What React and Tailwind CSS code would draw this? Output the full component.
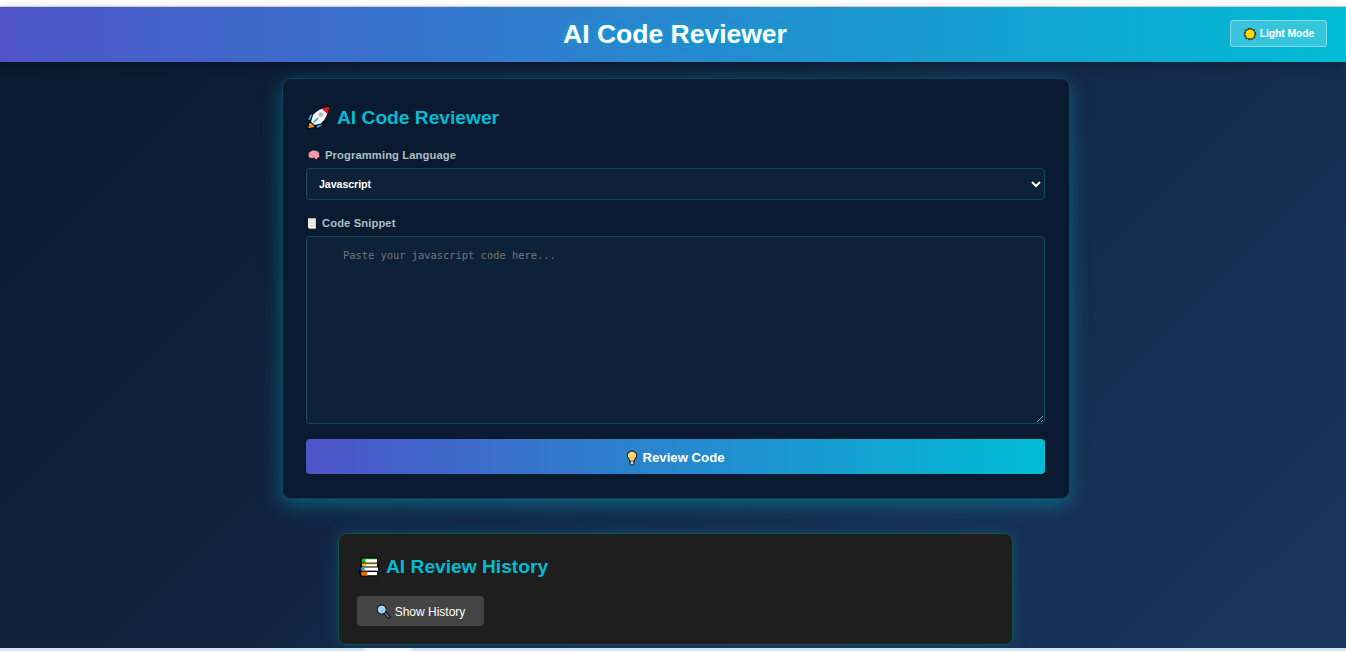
import React from "react";

const Sun = () => (
  <svg className="h-[14px] w-[14px] shrink-0" viewBox="0 0 14 14">
    <circle cx="7" cy="7" r="5.4" fill="#1f2a22" />
    <circle cx="7" cy="7" r="5.7" fill="none" stroke="#1f2a22" strokeWidth="1.2" strokeDasharray="1.5 1.48" />
    <circle cx="7" cy="7" r="4.6" fill="#ffd800" />
  </svg>
);

const Rocket = () => (
  <svg className="h-[24px] w-[24px] shrink-0" viewBox="1 1 22 22" stroke="#050a14" strokeWidth="1" strokeLinejoin="round">
    <path d="M2.5 22 L3.5 16.5 L8 15 L10 18 L8 21Z" fill="#f58b1f" />
    <path d="M9 7.5 L4.5 8.5 L2 14 L8 14Z" fill="#2aa8e8" />
    <path d="M16.5 14.5 L15.5 19.5 L10.5 22 L10 17Z" fill="#2aa8e8" />
    <path d="M22 2 C16 2 11 4 7 9 L5 15.5 L9 19 L15 17.5 C20 13 22 8 22 2Z" fill="#f8f8f8" />
    <path d="M22 2 C20 2 17.5 2.6 15.6 3.5 L20.5 8.4 C21.5 6 22 4 22 2Z" fill="#e81224" stroke="none" />
    <circle cx="14.6" cy="8.9" r="2" fill="#b9bdc4" stroke="#b0b4bb" strokeWidth="0.5" />
    <path d="M8 16 L12 12.2" stroke="#2aa8e8" strokeWidth="1.6" />
  </svg>
);

const Brain = () => (
  <svg className="h-[12px] w-[14px] shrink-0" viewBox="0 0 14 12">
    <path d="M1.2 7.2 C.6 4.2 2.4 2.3 4.5 1.8 C6 .5 8 .8 9 1.6 C11.5 1.7 13 4 12.7 6.3 C13 8.5 11.5 9.2 10.5 9.2 L9.7 11 L7.8 10.2 L7.5 9.1 C5 9.8 1.7 9.6 1.2 7.2Z" fill="#f5a3b3" stroke="#1b0c18" strokeWidth=".9" />
    <path d="M3 6 C4 4.5 5.2 6.5 6.2 5 M6 2.5 L7 4 M8.5 3.5 C8.5 5.5 10.5 4 11 5.6 M5 8 L8 7 L10 8" fill="none" stroke="#d67088" strokeWidth=".6" />
  </svg>
);

const Page = () => (
  <svg className="h-[13px] w-[12px] shrink-0" viewBox="0 0 12 13">
    <path d="M1.4 .8 H10.4 V12.2 H3.4 L1.4 10Z" fill="#efefef" stroke="#05080f" strokeWidth="1" />
    <path d="M3 3.5H9M3 6H9M3 8.5H9" stroke="#cfcfcf" strokeWidth=".6" />
    <path d="M1.7 9.8H3.6V12" fill="#d2d2d2" />
  </svg>
);

const Bulb = () => (
  <svg className="h-[16px] w-[12px] shrink-0" viewBox="0 0 12 16" stroke="#10202c" strokeWidth="1.1">
    <path d="M4 10.5H8V13.5L7 15H5L4 13.5Z" fill="#d8dde2" />
    <path d="M6 .9 A4.7 4.7 0 0 1 10.7 5.6 C10.7 8 8.6 8.7 8.1 11.2 H3.9 C3.4 8.7 1.3 8 1.3 5.6 A4.7 4.7 0 0 1 6 .9Z" fill="#ffd36e" />
    <path d="M6 8V12" stroke="#f2b95c" strokeWidth="1" />
  </svg>
);

const Books = () => (
  <svg className="h-[20px] w-[20px] shrink-0" viewBox="0 0 20 20">
    <path d="M2 .5H19V6.5H20V12.5H19V19.5H1.5L.2 17V13.5L.8 12.5V8L2 6.5 1 4V1.5Z" fill="#050505" />
    <path d="M6 2H18V5.6H6Z" fill="#fff" />
    <path d="M6.5 1.5H3.4Q1.8 3.6 3.4 5.8H6.5Z" fill="#16b51a" />
    <path d="M5 1.5H18V2.3H5Z" fill="#16b51a" />
    <path d="M6 7H18V9.4H6Z" fill="#fff" />
    <path d="M3 6.6H18V7.4H7V9.6H3Z" fill="#f7b900" />
    <path d="M5 10.5H19V13.6H5Z" fill="#fff" />
    <path d="M5.5 10H2.5Q1 11.8 2.5 13.9H5.5Z" fill="#2f8fe0" />
    <path d="M7 15H18V18.2H7Z" fill="#fff" />
    <path d="M9 14.7H3Q1 16.6 3 18.8H9Q6.8 16.8 9 14.7Z" fill="#f7630c" />
  </svg>
);

const Magnifier = () => (
  <svg className="h-[15px] w-[15px] shrink-0" viewBox="0 0 15 15">
    <path d="M8.8 8.8 L12.8 12.8" stroke="#111" strokeWidth="3.4" strokeLinecap="round" />
    <path d="M9 9 L12.7 12.7" stroke="#7b7f85" strokeWidth="1.5" strokeLinecap="round" />
    <circle cx="5.7" cy="5.6" r="4.4" fill="#8ecbf7" stroke="#111c26" strokeWidth="1.2" />
    <circle cx="5.7" cy="5.6" r="3.5" fill="none" stroke="#b9dcf5" strokeWidth=".8" />
    <path d="M3.6 6.5L6.8 3.4" stroke="#d5edff" strokeWidth="1" />
  </svg>
);

export default function App() {
  return (
    <div className="flex h-[651px] w-full flex-col overflow-hidden bg-white font-['Liberation_Sans',Arial,sans-serif]">
      <div className="h-[7px] shrink-0 border-b border-[#d9dcdf] bg-white" />
      <header className="z-10 grid h-[55px] shrink-0 grid-cols-[1fr_auto_1fr] items-center bg-[linear-gradient(90deg,#4e54c8,#00bcd4)] pr-[19px] pb-[2px] pl-[23px] shadow-[0_3px_10px_rgba(0,0,0,0.25)]">
        <span />
        <h1 className="text-[26.5px] leading-[30px] font-bold text-white [text-shadow:0_0_6px_rgba(0,188,212,0.7)]">AI Code Reviewer</h1>
        <button className="flex h-[27px] w-[97px] items-center justify-center gap-[3px] justify-self-end rounded-[3px] border border-white/40 bg-white/20 pt-px text-[10.4px] font-bold tracking-[-0.1px] whitespace-nowrap text-white">
          <Sun />
          Light Mode
        </button>
      </header>
      <main className="flex h-[586px] shrink-0 flex-col items-center overflow-hidden bg-[linear-gradient(135deg,#0a192f,#1a365d)] pt-[16px] pl-[5px]">
        <section className="h-[421px] w-[788px] shrink-0 rounded-[9px] border border-[#0b4557] bg-[#0a1a30] px-[23.5px] pt-[26px] shadow-[0_6px_20px_rgba(0,188,212,0.4)]">
          <h2 className="flex h-[26px] items-center gap-[7px] text-[19.2px] font-bold text-[#00bcd4]">
            <Rocket />
            AI Code Reviewer
          </h2>
          <label className="mt-[16px] flex h-[16px] items-center gap-[4px] pl-[1px] text-[11.2px] font-bold tracking-[0.12px] text-[#b0bec5]">
            <Brain />
            Programming Language
          </label>
          <select className="mt-[5px] block h-[32px] w-full rounded-[4px] border border-[#0b4c5f] bg-[#0d2139] pl-[8px] text-[10.67px] font-bold tracking-[-0.08px] text-white">
            <option>Javascript</option>
          </select>
          <label className="mt-[15px] flex h-[16px] items-center gap-[4px] text-[11.2px] font-bold tracking-[0.12px] text-[#b0bec5]">
            <Page />
            Code Snippet
          </label>
          <textarea
            className="mt-[5px] block h-[188px] w-full resize-y rounded-[4px] border border-[#0b4c5f] bg-[#0d2139] pt-[11px] pl-[36px] [font-family:'DejaVu_Sans_Mono',monospace] text-[10.4px] leading-[14px] text-white placeholder:text-[#757575]"
            placeholder="Paste your javascript code here..."
          />
          <button className="mt-[15px] flex h-[35px] w-full items-center justify-center gap-[4px] rounded-[4px] bg-[linear-gradient(90deg,#4e54c8,#00bcd4)] pt-[2px] text-[13.2px] font-bold text-white">
            <Bulb />
            Review Code
          </button>
        </section>
        <section className="mt-[34px] h-[112px] w-[675px] shrink-0 rounded-[8px] border border-[#144f52] bg-[#1e1e1e] pt-[20px] pl-[18px] shadow-[0_0_16px_rgba(0,188,212,0.22)]">
          <h2 className="flex h-[26px] items-center gap-[7px] pl-[2px] text-[19.2px] font-bold text-[#00bcd4]">
            <Books />
            AI Review History
          </h2>
          <button className="mt-[16px] flex h-[30px] w-[127px] items-center justify-center gap-[4px] rounded-[4px] bg-[#444] pt-px text-[12px] text-white">
            <Magnifier />
            Show History
          </button>
        </section>
      </main>
      <div className="flex h-[3px] shrink-0 bg-[#d3e3f0] pl-[364px]">
        <div className="h-[3px] w-[48px] bg-[#f3f6fa]" />
      </div>
    </div>
  );
}
